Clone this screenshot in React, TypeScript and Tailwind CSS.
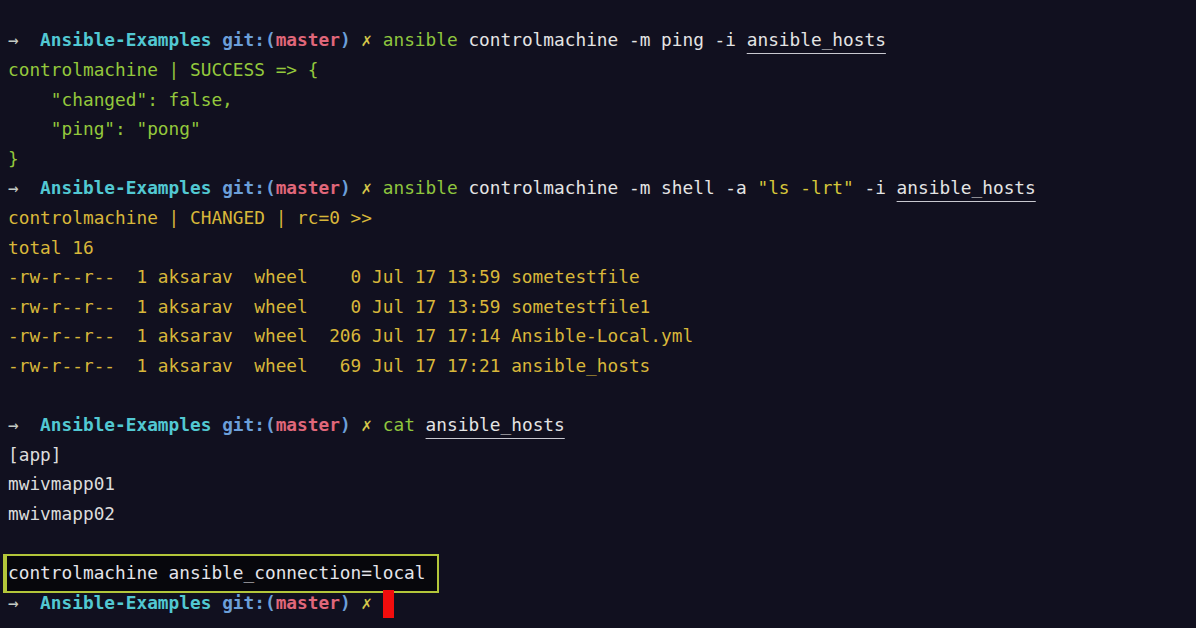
import React from "react";

// zsh prompt: →  Ansible-Examples git:(master) ✗
function Prompt() {
  return (
    <>
      <span className="inline-block w-[10.7px] text-center text-[#c4cbc4]">→</span>
      <span>  </span>
      <span className="font-bold text-[#52c8d2]">Ansible-Examples</span>
      <span> </span>
      <span className="font-bold text-[#6c9fd9]">git:(</span>
      <span className="font-bold text-[#e0677a]">master</span>
      <span className="font-bold text-[#6c9fd9]">)</span>
      <span> </span>
      <span className="inline-block w-[10.7px] text-center font-bold text-[#d6c64a]">✗</span>
      <span> </span>
    </>
  );
}

function Line({ children, className = "" }: { children?: React.ReactNode; className?: string }) {
  return (
    <div className={`flex h-[29.6px] items-center whitespace-pre ${className}`}>{children}</div>
  );
}

const hosts = "underline decoration-1 underline-offset-[7px] decoration-[#c8c8d0]";

const lsRows = [
  "-rw-r--r--  1 aksarav  wheel    0 Jul 17 13:59 sometestfile",
  "-rw-r--r--  1 aksarav  wheel    0 Jul 17 13:59 sometestfile1",
  "-rw-r--r--  1 aksarav  wheel  206 Jul 17 17:14 Ansible-Local.yml",
  "-rw-r--r--  1 aksarav  wheel   69 Jul 17 17:21 ansible_hosts",
];

export default function App() {
  return (
    <div className="h-[628px] w-[1196px] overflow-hidden bg-[#11101f] pl-2 pt-[26px] font-['DejaVu_Sans_Mono',monospace] text-[17.8px] text-[#e4e4e4]">
      <Line>
        <Prompt />
        <span className="text-[#8fc63e]">ansible</span>
        <span> controlmachine -m ping -i </span>
        <span className={hosts}>ansible_hosts</span>
      </Line>
      <Line className="text-[#94c83c]">controlmachine | SUCCESS =&gt; {"{"}</Line>
      <Line className="text-[#94c83c]">{'    "changed": false,'}</Line>
      <Line className="text-[#94c83c]">{'    "ping": "pong"'}</Line>
      <Line className="text-[#94c83c]">{"}"}</Line>

      <Line>
        <Prompt />
        <span className="text-[#8fc63e]">ansible</span>
        <span> controlmachine -m shell -a </span>
        <span className="text-[#d6c63a]">"ls -lrt"</span>
        <span> -i </span>
        <span className={hosts}>ansible_hosts</span>
      </Line>
      <Line className="text-[#d8b73a]">controlmachine | CHANGED | rc=0 &gt;&gt;</Line>
      <Line className="text-[#d8b73a]">total 16</Line>
      {lsRows.map((row) => (
        <Line key={row} className="text-[#d8b73a]">
          {row}
        </Line>
      ))}
      <Line />

      <Line>
        <Prompt />
        <span className="text-[#8fc63e]">cat</span>
        <span> </span>
        <span className={hosts}>ansible_hosts</span>
      </Line>
      <Line className="text-[#dcdcdc]">[app]</Line>
      <Line className="text-[#dcdcdc]">mwivmapp01</Line>
      <Line className="text-[#dcdcdc]">mwivmapp02</Line>
      <Line />

      <Line>
        <span className="-ml-[5px] flex h-[39px] shrink-0 items-center border-2 border-l-4 border-[#b3c63a] bg-[#07070c] pl-[1px] pr-[11px] text-[#e4e4ea]">
          controlmachine ansible_connection=local
        </span>
      </Line>
      <Line>
        <Prompt />
        <span className="mt-[2px] inline-block h-[28px] w-[11px] bg-[#f20d0d]" />
      </Line>
    </div>
  );
}
